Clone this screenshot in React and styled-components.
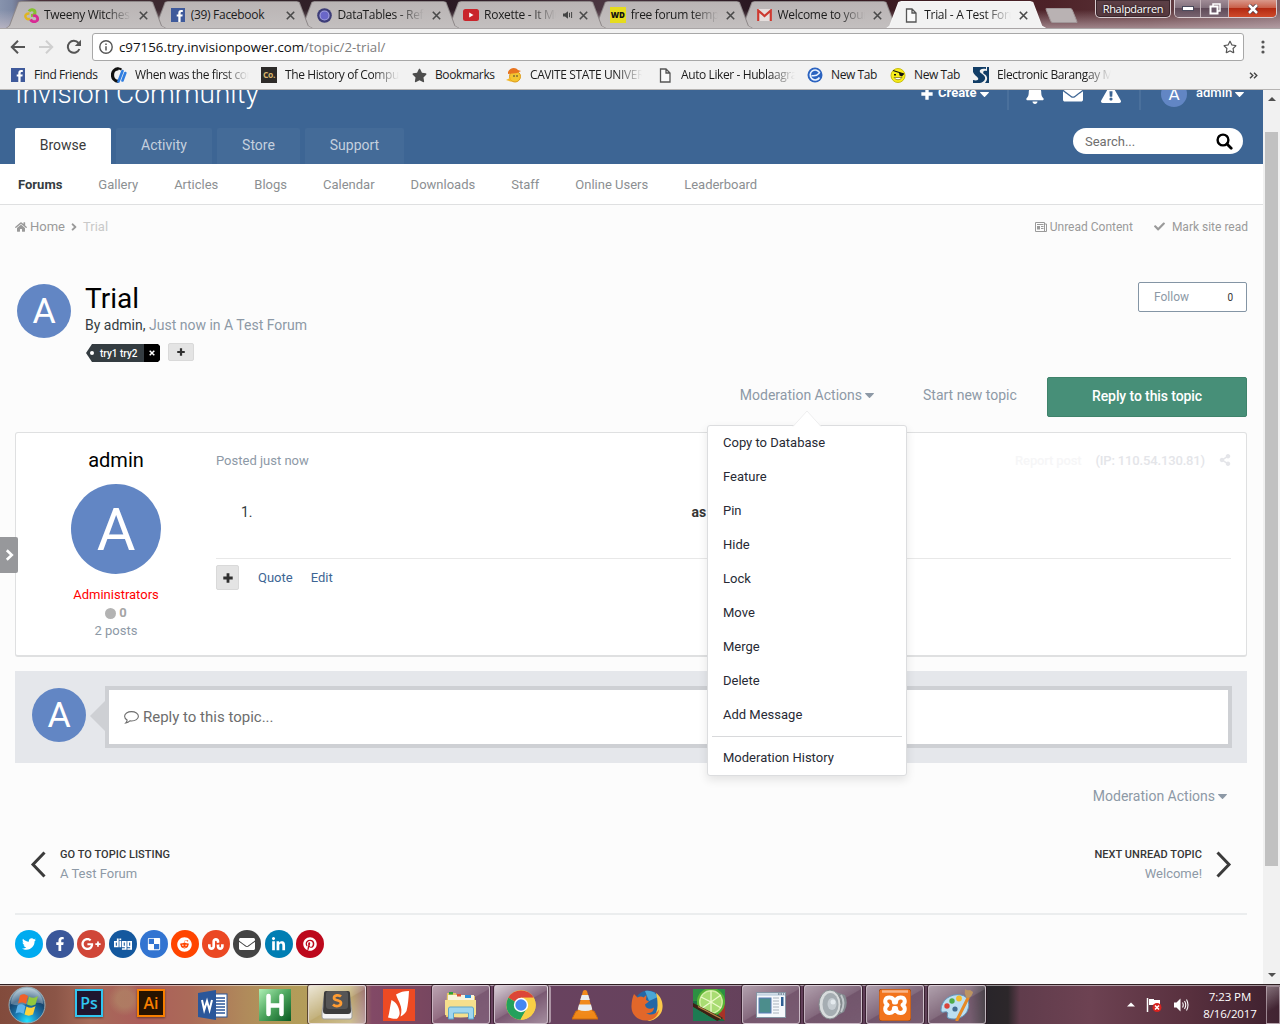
import React from 'react';
import styled, { createGlobalStyle, css } from 'styled-components';
import {
  FaHome, FaAngleRight, FaCheck, FaBell, FaEnvelope, FaExclamationTriangle,
  FaShareAlt, FaTwitter, FaFacebookF, FaGooglePlusG, FaDigg, FaDelicious,
  FaReddit, FaStumbleupon, FaLinkedinIn, FaPinterest, FaStar, FaRegStar,
} from 'react-icons/fa';

const GlobalStyle = createGlobalStyle`
  *, *::before, *::after { box-sizing: border-box; }
  body { margin: 0; font-family: Roboto, "Liberation Sans", sans-serif; }
  svg { display: block; flex: none; }
`;

const Screen = styled.div`
  width: 1280px;
  height: 1024px;
  overflow: hidden;
  display: flex;
  flex-direction: column;
  background: #fcfcfc;
`;

/* ---------- browser window ---------- */
const uiFont = css`font-family: "Open Sans", "Noto Sans", sans-serif;`;

const TitleBar = styled.div`
  height: 28px;
  flex: none;
  display: flex;
  padding-left: 6px;
  ${uiFont}
  background:
    linear-gradient(180deg, rgba(255,255,255,0) 35%, rgba(220,205,210,.55) 100%),
    linear-gradient(90deg, #8793ad 0, #7c88a4 12px, #4a3038 40px, #33242a 240px, #2b1a24 450px, #4a3540 600px, #28161f 760px, #3c1c22 900px, #4d2228 1050px, #5b3338 1150px, #7d5f66 1280px);
`;
const TabShape = styled.div`
  width: 160px;
  height: 27px;
  margin: 1px -13.3px 0 0;
  flex: none;
  position: relative;
  z-index: ${p => p.$z};
  background: ${p => (p.$active ? '#f6f6f6' : '#8d8788')};
  clip-path: polygon(0 100%, 3px 92%, 12px 4%, 15px 0, 144px 0, 147px 4%, 156px 92%, 160px 100%);
`;
const TabFace = styled.div`
  height: 27px;
  padding: 1px 0 0 17px;
  display: flex;
  align-items: center;
  background: ${p => (p.$active ? '#f2f2f2' : 'linear-gradient(180deg, #b9b4b4, #c3bfbf)')};
  clip-path: polygon(1px 100%, 4px 92%, 13px 5%, 16px 1px, 143px 1px, 146px 5%, 155px 92%, 159px 100%);
`;
const TabIcon = styled.div`
  width: 16px;
  height: 16px;
  flex: none;
  display: flex;
  align-items: center;
  justify-content: center;
`;
const fade = css`mask-image: linear-gradient(90deg, #000 calc(100% - 26px), transparent);`;
const TabText = styled.div`
  width: ${p => p.$w || 87}px;
  flex: none;
  margin-left: 5px;
  overflow: hidden;
  white-space: nowrap;
  font-size: 12px;
  letter-spacing: -0.3px;
  line-height: 18px;
  color: #1c1c1c;
  ${p => p.$fade && fade}
`;
const TabTail = styled.div`
  flex: 1;
  display: flex;
  align-items: center;
  justify-content: flex-end;
  gap: 6px;
  padding-right: 18px;
`;
const NewTab = styled.div`
  width: 27px;
  height: 15px;
  margin: 8px 0 0 15px;
  border-radius: 2px;
  transform: skewX(22deg);
  background: #b9b2b3;
  border: 1px solid #a19799;
`;
const Caption = styled.div`
  margin-left: auto;
  display: flex;
  gap: 3px;
  padding-right: 3px;
`;
const UserBadge = styled.div`
  width: 76px;
  height: 18px;
  border: 1px solid #d9ccd0;
  border-top: 0;
  border-radius: 0 0 5px 5px;
  background: linear-gradient(180deg, #5c4046, #56383f);
  box-shadow: inset 0 0 0 1px #3a252b;
  color: #fff;
  font-size: 11px;
  letter-spacing: -0.3px;
  line-height: 17px;
  text-align: center;
  text-shadow: 0 0 3px #000;
`;
const WindowButtons = styled.div`
  display: flex;
  width: 103px;
  height: 18px;
  overflow: hidden;
  border: 1px solid #d9ccd0;
  border-top: 0;
  border-radius: 0 0 5px 5px;
`;
const WindowButton = styled.div`
  width: ${p => p.$w}px;
  display: flex;
  align-items: center;
  justify-content: center;
  border-right: ${p => (p.$close ? 0 : '1px solid #c4b4ba')};
  background: ${p => (p.$close
    ? 'linear-gradient(180deg, #d9988a 0, #c9604a 45%, #b32a12 50%, #cf4a2a 100%)'
    : 'linear-gradient(180deg, #a08c96 0, #82707c 45%, #5f4a58 50%, #786470 100%)')};
`;

const Toolbar = styled.div`
  height: 62px;
  flex: none;
  display: flex;
  flex-direction: column;
  background: #f2f2f2;
  border-top: 1px solid #a9a5a6;
  border-bottom: 1px solid #b6b4b3;
  ${uiFont}
`;
const AddressRow = styled.div`
  height: 32px;
  padding: 4px 14px 0 10px;
  display: flex;
  align-items: center;
`;
const NavButtons = styled.div`
  width: 82px;
  display: flex;
  gap: 12px;
`;
const AddressBox = styled.div`
  width: 1152px;
  height: 28px;
  border: 1px solid #a8a8a8;
  border-radius: 3px;
  background: #fff;
  display: flex;
  align-items: center;
  padding: 0 6px;
  font-size: 13.3px;
  color: #111;
`;
const UrlText = styled.div`
  flex: 1;
  margin-left: 6px;
  line-height: 18px;
`;
const UrlPath = styled.span`color: #7d7d7d;`;
const MenuDots = styled.div`
  margin-left: 17px;
`;
const BookmarkRow = styled.div`
  height: 28px;
  display: flex;
  align-items: center;
  padding-left: 10px;
  font-size: 12px;
  letter-spacing: -0.4px;
  color: #1c1c1c;
`;
const Bookmark = styled.div`
  width: ${p => p.$w}px;
  flex: none;
  display: flex;
  align-items: center;
`;
const BookmarkText = styled.div`
  width: ${p => p.$w}px;
  margin-left: 8px;
  white-space: nowrap;
  overflow: hidden;
  line-height: 18px;
  ${p => p.$fade && fade}
`;
const More = styled.div`
  margin: 0 22px 0 auto;
`;

/* ---------- page ---------- */
const Viewport = styled.div`
  height: 894px;
  flex: none;
  display: flex;
`;
const Page = styled.div`
  width: 1263px;
  height: 894px;
  overflow: hidden;
  position: relative;
  background: #fcfcfc;
  color: #353c41;
  font-size: 13px;
`;
const ScrollBar = styled.div`
  width: 17px;
  background: #f1f1f1;
  display: flex;
  flex-direction: column;
  align-items: center;
`;
const ScrollArrow = styled.div`
  width: 0;
  height: 0;
  border: 4px solid transparent;
  border-${p => (p.$up ? 'bottom' : 'top')}: 4px solid #505050;
  border-${p => (p.$up ? 'top' : 'bottom')}-width: 0;
  margin: ${p => (p.$up ? '7px 0 31px' : '107px 0 0')};
`;
const ScrollThumb = styled.div`
  width: 13px;
  height: 734px;
  background: #c1c1c1;
`;

const Header = styled.header`
  height: 74px;
  background: #3d6594;
  overflow: hidden;
`;
const HeaderTop = styled.div`
  height: 42px;
  margin-top: -22px;
  padding: 0 19px 0 15px;
  display: flex;
  align-items: flex-start;
`;
const SiteName = styled.div`
  flex: 1;
  color: #fff;
  font-size: 28px;
  font-weight: 300;
  line-height: 52px;
  white-space: nowrap;
`;
const UserTools = styled.div`
  height: 52px;
  display: flex;
  align-items: center;
  color: #fff;
`;
const ToolLabel = styled.div`
  width: ${p => p.$w}px;
  margin: 0 3px 0 ${p => p.$ml}px;
  font-weight: ${p => p.$weight};
  font-size: 13px;
  line-height: 16px;
  padding-bottom: 2px;
  white-space: nowrap;
`;
const Divider = styled.div`
  width: 2px;
  height: 32px;
  margin: 0 ${p => p.$mr}px 0 ${p => p.$ml}px;
  background: #4a709c;
`;
const ToolIcons = styled.div`
  display: flex;
  align-items: center;
  gap: 18px;
`;
const Avatar = styled.div`
  width: ${p => p.$size}px;
  height: ${p => p.$size}px;
  flex: none;
  border-radius: 50%;
  background: #6286c4;
  color: #fff;
  font-size: ${p => p.$size * 0.66}px;
  line-height: ${p => p.$size * 1.03}px;
  text-align: center;
`;
const HeaderNav = styled.div`
  margin-top: 18px;
  height: 36px;
  padding: 0 20px 0 15px;
  display: flex;
  gap: 5px;
`;
const NavTab = styled.div`
  width: ${p => p.$w}px;
  height: 36px;
  border-radius: 2px 2px 0 0;
  background: ${p => (p.$active ? '#fff' : '#446b98')};
  color: ${p => (p.$active ? '#3a3a3a' : '#c4d0de')};
  font-size: 14px;
  line-height: 35px;
  text-align: center;
`;
const Search = styled.div`
  width: 170px;
  height: 26px;
  margin-left: auto;
  border-radius: 13px;
  background: #fff;
  display: flex;
  align-items: center;
  justify-content: space-between;
  padding: 0 10px 0 12px;
  color: #6e6e6e;
  line-height: 27px;
`;
const SubNav = styled.nav`
  height: 41px;
  border-bottom: 1px solid #dfe0e1;
  background: #fff;
  display: flex;
  gap: 36px;
  padding-left: 18px;
  line-height: 41px;
`;
const SubLink = styled.div`
  color: ${p => (p.$active ? '#353c41' : '#8c8f92')};
  font-weight: ${p => (p.$active ? 700 : 400)};
`;
const Content = styled.main`
  padding: 0 16px 0 15px;
`;
const Crumbs = styled.div`
  height: 43px;
  display: flex;
  align-items: center;
  color: #9a9a9a;
  margin-right: -1px;
`;
const Crumb = styled.div`
  margin-left: ${p => p.$ml}px;
  color: ${p => p.$c || 'inherit'};
  font-size: ${p => p.$size || 13}px;
`;
const CrumbTools = styled.div`
  margin-left: auto;
  display: flex;
  align-items: center;
`;
const TopicHead = styled.section`
  height: 129px;
  padding: 34px 0 0 2px;
  display: flex;
  align-items: flex-start;
`;
const TopicAvatar = styled.div`margin-top: 2px;`;
const TopicInfo = styled.div`
  flex: 1;
  padding-left: 14px;
`;
const TopicTitle = styled.h1`
  margin: 0;
  font-size: 28px;
  font-weight: 400;
  line-height: 34px;
  color: #000;
`;
const Byline = styled.div`
  font-size: 14px;
  line-height: 18px;
`;
const Muted = styled.span`color: #8d99a6;`;
const Tags = styled.div`
  display: flex;
  margin: 9px 0 0 1px;
  gap: 8px;
`;
const Tag = styled.div`
  width: 74px;
  height: 18px;
  margin-top: 1px;
  display: flex;
  align-items: center;
  padding-left: 4px;
  background: linear-gradient(90deg, #343c41 58px, #000 58px);
  clip-path: polygon(0 50%, 6px 0, 72px 0, 100% 2px, 100% 16px, 72px 100%, 6px 100%);
  color: #fff;
  font-size: 10px;
  font-weight: 500;
`;
const TagDot = styled.div`
  width: 4px;
  height: 4px;
  border-radius: 50%;
  background: #fff;
`;
const TagName = styled.div`
  width: 50px;
  padding-left: 6px;
  white-space: nowrap;
`;
const TagRemove = styled.div`
  width: 16px;
  display: flex;
  justify-content: center;
`;
const PlusButton = styled.div`
  width: ${p => p.$w}px;
  height: ${p => p.$h}px;
  border: 1px solid #d9d9d9;
  border-radius: 2px;
  background: #e4e4e4;
  color: #303030;
  display: flex;
  align-items: center;
  justify-content: center;
`;
const Follow = styled.div`
  width: 109px;
  height: 30px;
  border: 1px solid #8495a5;
  border-radius: 2px;
  background: #fff;
  display: flex;
  align-items: center;
  justify-content: space-between;
  padding: 0 13px 0 15px;
  font-size: 12px;
  color: #8d99a6;
`;
const FollowCount = styled.span`
  font-size: 10px;
  color: #333;
  padding-top: 1px;
`;
const Actions = styled.div`
  height: 55px;
  display: flex;
  justify-content: flex-end;
  font-size: 14px;
  line-height: 36px;
  color: #8d99a6;
`;
const ModLink = styled.div`
  display: flex;
  align-items: center;
  gap: 3px;
  height: 36px;
  font-size: 14px;
  color: #8d99a6;
`;
const StartLink = styled.div`
  width: 95px;
  margin: 0 29px 0 49px;
  white-space: nowrap;
`;
const ReplyButton = styled.div`
  width: 200px;
  height: 40px;
  border: 1px solid #3f836b;
  border-radius: 2px;
  background: #478f78;
  color: #fff;
  font-weight: 500;
  letter-spacing: -0.1px;
  text-align: center;
  line-height: 37px;
`;
const Post = styled.article`
  height: 225px;
  border: 1px solid #dfe0e1;
  border-bottom-width: 2px;
  border-radius: 3px;
  background: #fff;
  display: flex;
  padding-right: 15px;
`;
const Author = styled.aside`
  width: 200px;
  flex: none;
  display: flex;
  flex-direction: column;
  align-items: center;
  padding-top: 14px;
  line-height: 18px;
`;
const AuthorName = styled.div`
  font-size: 20px;
  line-height: 26px;
  color: #000;
  margin-bottom: 11px;
`;
const Group = styled.div`
  margin-top: 12px;
  color: #f00;
`;
const Reputation = styled.div`
  display: flex;
  align-items: center;
  gap: 3px;
  color: #a5a5a5;
  font-weight: 700;
`;
const RepDot = styled.div`
  width: 11px;
  height: 11px;
  border-radius: 50%;
  background: #b3b3b3;
`;
const PostBody = styled.div`
  flex: 1;
`;
const PostMeta = styled.div`
  height: 56px;
  padding-bottom: 2px;
  display: flex;
  align-items: center;
  color: #8d99a6;
`;
const PostTools = styled.div`
  margin-left: auto;
  display: flex;
  align-items: center;
  gap: 14px;
  font-weight: 500;
  letter-spacing: -0.15px;
  color: #e4e5e9;
`;
const Faint = styled.span`color: #f6f6f7;`;
const PostText = styled.div`
  height: 70px;
  border-bottom: 1px solid #e8e8e8;
  padding: 14px 0 0 25px;
  display: flex;
  font-size: 14px;
  line-height: 18px;
`;
const PostCenter = styled.b`
  margin-left: 439px;
  color: #353535;
`;
const PostControls = styled.div`
  display: flex;
  align-items: center;
  padding-top: 6px;
  color: #3d6594;
`;
const Control = styled.span`
  margin-left: ${p => p.$ml}px;
`;
const ReplyBox = styled.section`
  height: 92px;
  margin-top: 14px;
  padding: 15px 15px 0 17px;
  background: #e5e7eb;
  display: flex;
`;
const ReplyAvatar = styled.div`padding-top: 2px;`;
const ReplyArrow = styled.div`
  border: 15px solid transparent;
  border-right-color: #ced0d4;
  border-left-width: 0;
  height: 30px;
  margin: 15px 0 0 4px;
`;
const ReplyField = styled.div`
  flex: 1;
  height: 62px;
  border: 4px solid #ced0d4;
  background: #fff;
  display: flex;
  align-items: center;
  padding-left: 15px;
  gap: 4px;
  font-size: 15px;
  color: #6d6d6d;
`;
const BottomActions = styled.div`
  height: 36px;
  margin-top: 15px;
  padding-right: 20px;
  display: flex;
  justify-content: flex-end;
`;
const Pager = styled.div`
  height: 101px;
  border-bottom: 2px solid #ebedee;
  padding: 31px 15px 0;
  display: flex;
  justify-content: space-between;
`;
const PagerLink = styled.div`
  display: flex;
  gap: 14px;
  text-align: ${p => (p.$right ? 'right' : 'left')};
`;
const PagerHint = styled.div`
  font-size: 11px;
  font-weight: 500;
  letter-spacing: 0.05px;
  line-height: 19px;
  color: #353535;
`;
const PagerName = styled.div`
  line-height: 19px;
  color: #8d99a6;
`;
const PagerChevron = styled.svg`
  margin-top: 6px;
`;
const Shares = styled.div`
  display: flex;
  gap: 3.2px;
  padding-top: 15px;
`;
const Share = styled.div`
  width: 28px;
  height: 28px;
  border-radius: 50%;
  background: ${p => p.$c};
  color: #fff;
  display: flex;
  align-items: center;
  justify-content: center;
`;
const Drawer = styled.div`
  position: absolute;
  left: 0;
  top: 447px;
  width: 18px;
  height: 36px;
  border-radius: 0 2px 2px 0;
  background: #97989b;
  color: #fff;
  display: flex;
  align-items: center;
  justify-content: center;
`;
const Menu = styled.div`
  position: absolute;
  left: 707px;
  top: 335px;
  width: 200px;
  height: 351px;
  border: 1px solid #dcdddf;
  border-radius: 3px;
  background: #fff;
  box-shadow: 0 4px 10px rgba(0, 0, 0, .1);
`;
const MenuNotch = styled.svg`
  position: absolute;
  left: 84px;
  top: -16px;
`;
const MenuItem = styled.div`
  height: 34px;
  padding-left: 15px;
  line-height: 33px;
  color: #272a34;
`;
const MenuRule = styled.div`
  height: 1px;
  margin: 4px 4px;
  background: #d8d9db;
`;

/* ---------- taskbar ---------- */
const TaskBar = styled.div`
  height: 40px;
  flex: none;
  display: flex;
  align-items: flex-start;
  border-top: 1px solid #2f2023;
  box-shadow: inset 0 1px 0 rgba(255,255,255,.5);
  color: #fff;
  ${uiFont}
  background:
    radial-gradient(circle at 125px 14px, rgba(178,140,105,.6) 0 8px, transparent 17px),
    linear-gradient(90deg, #824b3c 0, #8b5547 55px, #a66b59 90px, #ab5d5a 140px, #ab6a58 190px, #b08a5b 245px, #b29b59 285px, #b6a05c 350px, #824966 372px, #7a4760 420px, #694260 480px, #66425c 720px, #5f3e58 860px, #61445a 970px, #29252a 988px, #2c272a 1008px, #603c4c 1020px, #6d4252 1090px, #58303e 1190px, #3d202e 1280px);
`;
const Start = styled.div`
  width: 60px;
  height: 39px;
  display: flex;
  align-items: center;
  padding-left: 8px;
`;
const Task = styled.div`
  width: 58px;
  height: 39px;
  margin-right: 4px;
  flex: none;
  display: flex;
  align-items: center;
  justify-content: center;
  border: 1px solid transparent;
  ${p => p.$open && css`
    border-color: rgba(235,225,232,.65);
    border-radius: 3px;
    box-shadow: 0 0 0 1px rgba(30,12,22,.6);
    background: linear-gradient(150deg, rgba(255,255,255,${p.$bright ? 0.75 : 0.5}) 0, rgba(255,255,255,.22) 50%, rgba(255,255,255,.12) 52%, rgba(255,255,255,${p.$bright ? 0.4 : 0.15}) 100%);
  `}
  ${p => p.$stack && css`
    width: 54px;
    margin-right: 8px;
    box-shadow: 0 0 0 1px rgba(30,12,22,.6), 4px 0 0 -1px rgba(190,170,182,.8);
  `}
`;
const AppTile = styled.div`
  width: 28px;
  height: 28px;
  margin-bottom: 3px;
  border: 2px solid ${p => p.$c};
  background: ${p => p.$bg};
  color: ${p => p.$c};
  font-size: 16px;
  font-weight: 600;
  line-height: 24px;
  text-align: center;
  box-shadow: 0 1px 2px rgba(0,0,0,.4);
`;
const Tray = styled.div`
  margin-left: auto;
  height: 39px;
  display: flex;
  align-items: center;
`;
const TrayIcons = styled.div`
  width: 67px;
  display: flex;
  align-items: center;
  gap: 11px;
`;
const Clock = styled.div`
  width: 72px;
  font-size: 11.5px;
  line-height: 17px;
  letter-spacing: -0.1px;
  text-align: center;
  white-space: nowrap;
`;
const ShowDesktop = styled.div`
  width: 14px;
  height: 38px;
  border: 1px solid rgba(230,215,222,.55);
  background: linear-gradient(150deg, rgba(255,255,255,.35), rgba(255,255,255,.02) 60%);
`;

/* ---------- small drawings ---------- */
const Caret = () => (
  <svg width="9" height="5" viewBox="0 0 9 5"><path d="M.4 0h8.200q.5.2.2.7L5 4.700q-.5.400-1 0L.2.700Q-.1.2.4 0z" fill="currentColor" /></svg>
);
const Plus = ({ size }) => (
  <svg width={size} height={size} viewBox="0 0 10 10"><path d="M5 .3v9.400M.3 5h9.400" stroke="currentColor" strokeWidth="2.800" /></svg>
);
const Magnifier = () => (
  <svg width="17" height="17" viewBox="0 0 17 17"><circle cx="7" cy="7" r="5.400" fill="none" stroke="#000" strokeWidth="2.400" /><path d="M11 11l4.200 4.200" stroke="#000" strokeWidth="2.800" strokeLinecap="round" /></svg>
);
const Newspaper = () => (
  <svg width="12" height="10" viewBox="0 0 12 10"><path d="M.5 9.500V.5h9v9zM9.500 2h2v7.500H1" fill="none" stroke="#9a9a9a" /><path d="M2 4h3v3.500H2z" fill="#9a9a9a" /><path d="M6 4.500h2.500M6 6.500h2.500M2 2.500h6.500" stroke="#9a9a9a" /></svg>
);
const Bubble = () => (
  <svg width="15" height="13" viewBox="0 0 15 13"><path d="M7.500.6c3.900 0 6.900 2.100 6.900 4.700s-3 4.700-6.900 4.700c-.6 0-1.100 0-1.600-.1-1.100 1-2.300 1.700-4.100 2 .8-.8 1.300-1.600 1.300-2.800C1.500 8.200.6 6.900.6 5.300.6 2.700 3.600.6 7.500.6z" fill="none" stroke="#6d6d6d" strokeWidth="1.100" /></svg>
);
const CloseX = () => (
  <svg width="9" height="9" viewBox="0 0 9 9"><path d="M.8.8l7.400 7.400M8.200.8L.8 8.200" stroke="#4a4a4a" strokeWidth="1.600" /></svg>
);
const FbIcon = () => (
  <svg width="14" height="14" viewBox="0 0 14 14"><rect width="14" height="14" fill="#3f5a9b" /><path d="M7.300 14V8.600H5.700V6.500h1.600V5c0-1.900 1.100-2.900 2.800-2.900h1.700v2h-1.100c-.8 0-1.100.4-1.100 1.100v1.300h2.100l-.3 2.100H9.600V14z" fill="#fff" /></svg>
);
const PageIcon = () => (
  <svg width="12" height="15" viewBox="0 0 12 15"><path d="M1.500 1h5.500l4 4v9h-9.500zM7 1v4h4" fill="#fafafa" stroke="#555" strokeWidth="1.300" /></svg>
);
const favicons = {
  tweeny: <svg width="15" height="15" viewBox="0 0 15 15"><path d="M5 3.300C6 1 11 1 11 4.500 11 7 8.500 7.500 7 7.500" fill="none" stroke="#86c030" strokeWidth="3" /><path d="M5.500 5.500C2 5 0 8 2.500 10.500c1 .8 2.500.8 3.500 0" fill="none" stroke="#dfb520" strokeWidth="2.400" /><path d="M9 8c4-1.500 6 3 3.500 5-2 1.500-5 .5-6-1.500" fill="none" stroke="#d82a94" strokeWidth="2.800" /></svg>,
  fb: <FbIcon />,
  dt: <svg width="15" height="15" viewBox="0 0 15 15"><circle cx="7.500" cy="7.500" r="7.300" fill="#3d3d78" /><circle cx="7.500" cy="7.500" r="4.500" fill="#6a67c9" stroke="#a29fe0" strokeWidth="1.200" /></svg>,
  yt: <svg width="16" height="12" viewBox="0 0 16 12"><rect width="16" height="12" rx="2.500" fill="#c9252b" /><path d="M6.200 3.500v5l4.300-2.500z" fill="#fff" /></svg>,
  gm: <svg width="15" height="12" viewBox="0 0 15 12"><rect width="15" height="12" fill="#e5dedd" /><path d="M1.200 12V1.500L7.500 7l6.300-5.500V12" fill="none" stroke="#cc3a31" strokeWidth="2.200" /></svg>,
  page: <PageIcon />,
};
const WdIcon = styled.div`
  width: 16px;
  height: 16px;
  background: #e6dc1e;
  color: #111;
  font: 800 8px/16px "Open Sans", sans-serif;
  letter-spacing: 0;
  text-align: center;
`;
const CoIcon = styled.div`
  width: 16px;
  height: 16px;
  background: #2d2b29;
  color: #d8b56c;
  font: 700 8.5px/16px "Open Sans", sans-serif;
  text-align: center;
`;
const SpeakerSmall = () => (
  <svg width="10" height="8" viewBox="0 0 10 8"><path d="M0 2.500h2L5 .3v7.400L2 5.500H0z" fill="#444" /><path d="M6.500 1.800v4.400M8.600 1v6" stroke="#444" /></svg>
);

const tabs = [
  { icon: favicons.tweeny, text: 'Tweeny Witches', fade: true },
  { icon: favicons.fb, text: '(39) Facebook' },
  { icon: favicons.dt, text: 'DataTables - Refer', fade: true },
  { icon: favicons.yt, text: 'Roxette - It Must', fade: true, w: 72, audio: true },
  { icon: <WdIcon>WD</WdIcon>, text: 'free forum templates', fade: true },
  { icon: favicons.gm, text: 'Welcome to your', fade: true },
  { icon: favicons.page, text: 'Trial - A Test Forum', fade: true, active: true },
];

const bookmarks = [
  { w: 101, tw: 68, text: 'Find Friends', icon: <FbIcon /> },
  { w: 150, tw: 114, text: 'When was the first computer', fade: true, icon: <svg width="16" height="16" viewBox="0 0 16 16"><path d="M7.500 1.600C-.5 2-.5 14 7.500 14.400" fill="none" stroke="#111" strokeWidth="3.200" /><path d="M7 1.600q2 0 3.500 1" stroke="#111" strokeWidth="2" fill="none" /><path d="M7.500 14.500L11.500 4M11.500 13.500L14.300 6" stroke="#2f7de0" strokeWidth="2.600" strokeLinecap="round" /></svg> },
  { w: 150, tw: 114, text: 'The History of Computers', fade: true, icon: <CoIcon>Co.</CoIcon> },
  { w: 95, tw: 62, text: 'Bookmarks', icon: <FaStar size={15} color="#4d4d4d" /> },
  { w: 151, tw: 112, text: 'CAVITE STATE UNIVERSITY', fade: true, icon: <svg width="16" height="16" viewBox="0 0 16 16"><circle cx="9" cy="9.500" r="5.500" fill="#f4c531" stroke="#dd9a1b" /><path d="M2 5c2-5 8-5 10-2l3 1-4 2-9 1z" fill="#e8741f" /><path d="M0 13l4-2 2 4z" fill="#f5b826" /><circle cx="8" cy="9" r=".8" fill="#333" /><circle cx="11" cy="9" r=".8" fill="#333" /></svg> },
  { w: 150, tw: 114, text: 'Auto Liker - Hublaagram', fade: true, icon: <PageIcon /> },
  { w: 83, tw: 50, text: 'New Tab', icon: <svg width="16" height="16" viewBox="0 0 16 16"><circle cx="8" cy="8" r="7.500" fill="#2b63c0" /><path d="M12.500 10.500a5 5 0 1 1 .3-4.500M4.500 8.600c3 .6 6-.4 8-2.600" fill="none" stroke="#e9f2ff" strokeWidth="1.600" /></svg> },
  { w: 83, tw: 50, text: 'New Tab', icon: <svg width="16" height="16" viewBox="0 0 16 16"><circle cx="8" cy="8.500" r="7" fill="#f8ee18" stroke="#c8bc10" /><path d="M3 3.500l11 3.500" stroke="#111" strokeWidth="1.200" /><path d="M9 5.500l5 1.500-2 2.500-2.500-1zM4 7h2v1.500H4z" fill="#111" /><path d="M4 10.500c2 3 6 3 8 0z" fill="#fff" stroke="#7c6c08" strokeWidth=".7" /></svg> },
  { w: 150, tw: 114, text: 'Electronic Barangay Management', fade: true, icon: <svg width="16" height="16" viewBox="0 0 16 16"><path d="M0 0h13v2C8 1 6 3 7 5s6 3 5 7-7 5-12 4v-3c4 1 6 0 5-2S-1 7 0 3z" fill="#123d66" /><path d="M14 0h2v16h-4c3-3 3-7-1-9-2-2 0-4 3-3z" fill="#123d66" /></svg> },
];

const menuItems = ['Copy to Database', 'Feature', 'Pin', 'Hide', 'Lock', 'Move', 'Merge', 'Delete', 'Add Message'];

const shares = [
  ['#00abf0', FaTwitter, 14], ['#3a579a', FaFacebookF, 14], ['#d04638', FaGooglePlusG, 20], ['#14589e', FaDigg, 18],
  ['#3274d1', FaDelicious, 14], ['#ff4500', FaReddit, 15], ['#eb4823', FaStumbleupon, 16], ['#444444', FaEnvelope, 16],
  ['#007eb3', FaLinkedinIn, 15], ['#bd081c', FaPinterest, 14],
];

const StartOrb = () => (
  <svg width="38" height="38" viewBox="0 0 38 38">
    <defs><radialGradient id="orb" cx=".5" cy=".95" r=".9"><stop offset="0" stopColor="#22e4ff" /><stop offset=".35" stopColor="#1a7fb8" /><stop offset=".7" stopColor="#17456e" /><stop offset="1" stopColor="#9cb8c8" /></radialGradient></defs>
    <circle cx="19" cy="19" r="18" fill="url(#orb)" stroke="#98a9b0" />
    <path d="M3 18a16 16 0 0 1 32 0C26 14 15 22 3 18z" fill="#fff" opacity=".28" />
    <path d="M12 9.500c3-2 5-1.500 8 .5l-2 8c-3-2-5-2-8-.5z" fill="#f0602a" />
    <path d="M21 10.500c3 2 6 1.500 9-.5l-2.500 8.500c-3 1.500-5.500 1.500-8.500 0z" fill="#93c83e" />
    <path d="M9.500 19.500c3-2 5-1.500 8 .5l-2 8c-3-2-5-2-8-.5z" fill="#5fb4ec" />
    <path d="M18.500 20.500c3 2 6 1.500 9-.5L25 28.500c-3 1.500-5.500 1.500-8.500 0z" fill="#fdd33c" />
  </svg>
);
const WordIcon = () => (
  <svg width="30" height="30" viewBox="0 0 30 30"><rect x="14" y="4" width="15" height="23" fill="#fff" stroke="#2b579a" /><path d="M17 8h10M17 11h10M17 14h10M17 17h10M17 20h10M17 23h10" stroke="#2b579a" strokeWidth="1.300" /><path d="M0 3l18-3v30L0 27z" fill="#2b579a" /><path d="M4 10l2.200 10L9 11l2.500 9L14 10" fill="none" stroke="#fff" strokeWidth="2" /></svg>
);
const HIcon = () => (
  <svg width="32" height="32" viewBox="0 0 32 32"><defs><linearGradient id="hg" x1="0" y1="0" x2="1" y2="1"><stop offset="0" stopColor="#aef0b4" /><stop offset=".5" stopColor="#4ba45c" /><stop offset="1" stopColor="#0a5a22" /></linearGradient></defs><rect width="32" height="32" fill="url(#hg)" /><path d="M9.500 7v18M22.500 7v18M10 16.500h12" stroke="#fff" strokeWidth="4.500" strokeLinecap="round" /></svg>
);
const SublimeIcon = () => (
  <svg width="32" height="30" viewBox="0 0 32 30"><path d="M4 2h24l3 20v5q0 2-2 2H3q-2 0-2-2v-5z" fill="#f4f4f4" stroke="#9d9d9d" /><path d="M5 1h22q2 0 2 2l1 18q0 3-3 3H5q-3 0-3-3L3 3q0-2 2-2z" fill="#3c3c3c" /><rect x="5" y="1" width="22" height="18" rx="3" fill="#565656" /><path d="M20 6.500c-2-2-7-1.500-7 1.500s7 1.500 7 5-5.500 4-8 1.500" fill="none" stroke="#ff9c32" strokeWidth="2.700" /></svg>
);
const NitroIcon = () => (
  <svg width="32" height="32" viewBox="0 0 32 32"><rect width="32" height="32" fill="#ee4a23" /><path d="M8.500 11C7 17 6.500 24 5 28.500c4 1 6 1.500 9 1.200 2-2 3-4 2.500-7C16 18 13 13 8.500 11z" fill="#fff" /><path d="M13 5.500C17 3 21 2 26 2c-.5 8-1 14-2.500 20-1.500 2.500-3.500 4.500-6 5.500 1.500-5 1-9-.5-12.500-1-3-3-6-4-9.500z" fill="#fff" /></svg>
);
const ExplorerIcon = () => (
  <svg width="32" height="30" viewBox="0 0 32 30"><path d="M2 3h9l1 3h18v21H1z" fill="#e7c765" /><path d="M3 5h26v5H3z" fill="#f8f5dd" /><rect x="4" y="2" width="4" height="2.500" fill="#2da136" /><rect x="12" y="4" width="4" height="2.500" fill="#d95038" /><rect x="20" y="5" width="6" height="3" fill="#2d91db" /><path d="M0 10h31v15q-15 5-31 0z" fill="#f5df8d" /><path d="M5 17h22q1.500 0 1.500 2v10h-5v-6h-15v6h-5V19q0-2 1.500-2z" fill="#9fd6ef" stroke="#5ca6cc" /></svg>
);
const ChromeIcon = () => (
  <svg width="30" height="30" viewBox="0 0 30 30"><circle cx="15" cy="15" r="14.700" fill="#f9cf45" /><path d="M15 15L2.300 7.700A14.700 14.700 0 0 1 27.700 7.700H15z" fill="#dc4638" /><path d="M15 15l-12.700-7.300a14.700 14.700 0 0 0 12 22l6.800-12z" fill="#23a15c" /><path d="M15 7.700h12.700a14.700 14.700 0 0 1-13 22l7-12z" fill="#f9cf45" /><circle cx="15" cy="15" r="7.200" fill="#fff" /><circle cx="15" cy="15" r="5.700" fill="#4586f2" /></svg>
);
const VlcIcon = () => (
  <svg width="26" height="31" viewBox="0 0 26 31"><path d="M4 22h18l4 8H0z" fill="#f08818" stroke="#cc6a0a" /><path d="M11 2q2-2 4 0l6 22q-8 4-16 0z" fill="#f18a1c" /><path d="M9.700 6h6.600l1.500 5H8.200zM7 15.500h12l1.300 5q-7 3-14.600 0z" fill="#e9edf0" /></svg>
);
const FirefoxIcon = () => (
  <svg width="32" height="32" viewBox="0 0 32 32"><circle cx="17" cy="15" r="13.500" fill="#2467a6" /><path d="M14 2c6-1 10 1 13 6l-9 4z" fill="#49a6d6" /><path d="M25 4c7 5 8 14 5 20-3 5-8 8-14 8 8-3 11-10 10.500-17C26.500 11 26 8 25 4z" fill="#fbc84a" /><path d="M3 5l3.500 3.500c2.500-1.500 4.500-1.200 6 0L15.500 6l-.5 5 3 1.500-4 3c.5 4.500 5.500 5.500 9 3 0 4-3.500 6.500-8 5.500 4.500 3 10 1.500 13-3.500C27 28 22 31.500 15 31.500 6 31.500 0 25 .5 16.500.7 12 1.500 8 3 5z" fill="#e2672a" /></svg>
);
const LimeIcon = () => (
  <svg width="32" height="32" viewBox="0 0 32 32"><rect width="32" height="32" fill="#1b6e45" /><path d="M0 0h32v12H0z" fill="#2c8f42" /><path d="M20 20l12-8v20z" fill="#a83226" /><circle cx="18" cy="13" r="13" fill="#d5efa5" stroke="#58b437" strokeWidth="2.200" /><circle cx="18" cy="13" r="10.500" fill="#a9dc72" /><path d="M18 13V2M18 13L8 8M18 13l10-7M18 13L8 20M18 13l10 6M18 13v11" stroke="#edfacb" strokeWidth="1.300" /><path d="M0 14l30 15L24 32 0 18z" fill="#3d2115" /><path d="M0 18l24 14H0z" fill="#1d7a52" /><path d="M5 17.500L28 29.500" stroke="#b88444" strokeWidth="1.300" /></svg>
);
const WindowIcon = () => (
  <svg width="30" height="26" viewBox="0 0 30 26"><rect x=".5" y=".5" width="29" height="25" fill="#f5f8fb" stroke="#8493a2" /><path d="M1 2.500h28" stroke="#c5d4e2" strokeWidth="2.500" /><path d="M22 2h6" stroke="#43546a" strokeDasharray="1.500 1" /><rect x="3" y="6" width="12" height="15" fill="#4c8d8c" stroke="#5b7bb8" /><path d="M17 6h6M17 9h6M17 12h6M17 15h6M17 18h6M17 21h6" stroke="#a9b2bc" /><rect x="25" y="5" width="2.500" height="9" fill="#2f5f94" /></svg>
);
const VolumeIcon = () => (
  <svg width="30" height="31" viewBox="0 0 30 31"><path d="M12 1l15 5q4 9-1 17l-14 7z" fill="#858c91" /><path d="M23 6q5 8 0 17" stroke="#c1c7ca" strokeWidth="2" fill="none" /><ellipse cx="12" cy="15.500" rx="11" ry="14.500" fill="#d8dcdd" stroke="#868c90" /><ellipse cx="12.500" cy="15.500" rx="8" ry="11.500" fill="#a5adb2" /><ellipse cx="14" cy="15" rx="4.500" ry="6" fill="#c6cdd2" /><circle cx="15" cy="13" r="2.500" fill="#e4eaee" /></svg>
);
const XamppIcon = () => (
  <svg width="32" height="32" viewBox="0 0 32 32"><rect width="32" height="32" rx="3" fill="#f2741d" stroke="#a4501a" /><path d="M3 2.500h26" stroke="#f9b689" strokeWidth="2.500" /><path d="M10.500 8.500c-5 0-5.500 5-2 7.500-3.500 2.500-3 8 2 8 3.500 0 4.500-2 4.500-5h2c0 3 1 5 4.500 5 5 0 5.500-5.500 2-8 3.500-2.500 3-7.500-2-7.500-3.500 0-4.500 2-4.500 5h-2c0-3-1-5-4.500-5z" fill="#f2741d" stroke="#fff" strokeWidth="4" strokeLinejoin="round" /></svg>
);
const PaintIcon = () => (
  <svg width="34" height="32" viewBox="0 0 34 32"><path d="M1 21C1 11 11 4 21 6c7 1 9 8 7 14-2 8-12 12-20 9-2-2 1-5-1-6-2-1-6 2-6-2z" fill="#bcdff1" stroke="#6296bb" /><circle cx="7" cy="17" r="2.700" fill="#d9443a" /><circle cx="12" cy="12" r="2.700" fill="#4dab4a" /><circle cx="19" cy="9.500" r="2.900" fill="#f4bc2d" /><circle cx="15" cy="20" r="2.600" fill="#436d91" /><path d="M28 9L17 31" stroke="#e68a26" strokeWidth="3" strokeLinecap="round" /><path d="M26 8q-2-4-1-8 2 2 5 1l3 2q-1 5-5 6z" fill="#bc9461" /></svg>
);

function App() {
  return (
    <Screen>
      <GlobalStyle />
      <TitleBar>
        {tabs.map((t, i) => (
          <TabShape key={t.text} $active={t.active} $z={t.active ? 20 : 10 - i}>
            <TabFace $active={t.active}>
              <TabIcon>{t.icon}</TabIcon>
              <TabText $w={t.w} $fade={t.fade}>{t.text}</TabText>
              <TabTail>{t.audio && <SpeakerSmall />}<CloseX /></TabTail>
            </TabFace>
          </TabShape>
        ))}
        <NewTab />
        <Caption>
          <UserBadge>Rhalpdarren</UserBadge>
          <WindowButtons>
            <WindowButton $w={26}><svg width="12" height="5" viewBox="0 0 12 5"><rect x=".5" y=".5" width="11" height="4" fill="#fff" stroke="#4a4a5c" /></svg></WindowButton>
            <WindowButton $w={28}><svg width="12" height="12" viewBox="0 0 12 12"><path d="M4 1h7v7H4z" fill="none" stroke="#fff" strokeWidth="1.500" /><path d="M1.500 3.500h7v7h-7z" fill="#6a5868" stroke="#fff" strokeWidth="2" /></svg></WindowButton>
            <WindowButton $w={47} $close><svg width="12" height="10" viewBox="0 0 12 10"><path d="M2 1l8 8M10 1L2 9" stroke="#4b3540" strokeWidth="4" /><path d="M2 1l8 8M10 1L2 9" stroke="#fff" strokeWidth="2.500" /></svg></WindowButton>
          </WindowButtons>
        </Caption>
      </TitleBar>

      <Toolbar>
        <AddressRow>
          <NavButtons>
            <svg width="16" height="16" viewBox="0 0 16 16"><path d="M15 8H2.500M8 1.800L1.800 8 8 14.200" fill="none" stroke="#555" strokeWidth="2" /></svg>
            <svg width="16" height="16" viewBox="0 0 16 16"><path d="M1 8h12.500M8 1.800L14.200 8 8 14.200" fill="none" stroke="#cfcfcf" strokeWidth="2" /></svg>
            <svg width="16" height="16" viewBox="0 0 16 16"><path d="M13.400 10A6 6 0 1 1 12.500 4" fill="none" stroke="#555" strokeWidth="2" /><path d="M15 .8v6.200H8.800z" fill="#555" /></svg>
          </NavButtons>
          <AddressBox>
            <svg width="14" height="14" viewBox="0 0 14 14"><circle cx="7" cy="7" r="6.200" fill="none" stroke="#555" strokeWidth="1.400" /><path d="M7 6.200v4.300M7 3.400v1.500" stroke="#555" strokeWidth="1.500" /></svg>
            <UrlText>c97156.try.invisionpower.com<UrlPath>/topic/2-trial/</UrlPath></UrlText>
            <FaRegStar size={14} color="#555" />
          </AddressBox>
          <MenuDots>
            <svg width="4" height="14" viewBox="0 0 4 14" fill="#555"><circle cx="2" cy="2" r="1.600" /><circle cx="2" cy="7" r="1.600" /><circle cx="2" cy="12" r="1.600" /></svg>
          </MenuDots>
        </AddressRow>
        <BookmarkRow>
          {bookmarks.map((b, i) => (
            <Bookmark key={i} $w={b.w}>
              <TabIcon>{b.icon}</TabIcon>
              <BookmarkText $w={b.tw} $fade={b.fade}>{b.text}</BookmarkText>
            </Bookmark>
          ))}
          <More><svg width="9" height="7" viewBox="0 0 9 7"><path d="M1 .7l2.800 2.800L1 6.300M5 .7l2.800 2.800L5 6.300" fill="none" stroke="#444" strokeWidth="1.400" /></svg></More>
        </BookmarkRow>
      </Toolbar>

      <Viewport>
        <Page>
          <Header>
            <HeaderTop>
              <SiteName>Invision Community</SiteName>
              <UserTools>
                <Plus size={12} />
                <ToolLabel $w={39} $ml={5} $weight={700}>Create</ToolLabel>
                <Caret />
                <Divider $ml={18} $mr={16} />
                <ToolIcons>
                  <FaBell size={20} />
                  <FaEnvelope size={20} />
                  <FaExclamationTriangle size={20} />
                </ToolIcons>
                <Divider $ml={18} $mr={20} />
                <Avatar $size={26}>A</Avatar>
                <ToolLabel $w={36} $ml={9} $weight={500}>admin</ToolLabel>
                <Caret />
              </UserTools>
            </HeaderTop>
            <HeaderNav>
              <NavTab $w={96} $active>Browse</NavTab>
              <NavTab $w={96}>Activity</NavTab>
              <NavTab $w={83}>Store</NavTab>
              <NavTab $w={99}>Support</NavTab>
              <Search>Search...<Magnifier /></Search>
            </HeaderNav>
          </Header>
          <SubNav>
            <SubLink $active>Forums</SubLink>
            {['Gallery', 'Articles', 'Blogs', 'Calendar', 'Downloads', 'Staff', 'Online Users', 'Leaderboard'].map(l => (
              <SubLink key={l}>{l}</SubLink>
            ))}
          </SubNav>
          <Content>
            <Crumbs>
              <FaHome size={12} />
              <Crumb $ml={3}>Home</Crumb>
              <Crumb $ml={3}><FaAngleRight size={12} /></Crumb>
              <Crumb $ml={3} $c="#c9c9c9">Trial</Crumb>
              <CrumbTools>
                <Newspaper />
                <Crumb $ml={3} $size={12}>Unread Content</Crumb>
                <Crumb $ml={21}><FaCheck size={11} /></Crumb>
                <Crumb $ml={7} $size={12}>Mark site read</Crumb>
              </CrumbTools>
            </Crumbs>
            <TopicHead>
              <TopicAvatar><Avatar $size={54}>A</Avatar></TopicAvatar>
              <TopicInfo>
                <TopicTitle>Trial</TopicTitle>
                <Byline>By admin, <Muted>Just now in A Test Forum</Muted></Byline>
                <Tags>
                  <Tag>
                    <TagDot />
                    <TagName>try1 try2</TagName>
                    <TagRemove><svg width="6" height="6" viewBox="0 0 6 6"><path d="M.7.7l4.600 4.600M5.300.7L.7 5.300" stroke="#fff" strokeWidth="1.500" /></svg></TagRemove>
                  </Tag>
                  <PlusButton $w={26} $h={18}><Plus size={8} /></PlusButton>
                </Tags>
              </TopicInfo>
              <Follow>Follow<FollowCount>0</FollowCount></Follow>
            </TopicHead>
            <Actions>
              <ModLink>Moderation Actions <Caret /></ModLink>
              <StartLink>Start new topic</StartLink>
              <ReplyButton>Reply to this topic</ReplyButton>
            </Actions>
            <Post>
              <Author>
                <AuthorName>admin</AuthorName>
                <Avatar $size={90}>A</Avatar>
                <Group>Administrators</Group>
                <Reputation><RepDot />0</Reputation>
                <Muted>2 posts</Muted>
              </Author>
              <PostBody>
                <PostMeta>
                  Posted just now
                  <PostTools><Faint>Report post</Faint><span>(IP: 110.54.130.81)</span><FaShareAlt size={12} /></PostTools>
                </PostMeta>
                <PostText>1.<PostCenter>as</PostCenter></PostText>
                <PostControls>
                  <PlusButton $w={23} $h={25}><Plus size={10} /></PlusButton>
                  <Control $ml={19}>Quote</Control>
                  <Control $ml={18}>Edit</Control>
                </PostControls>
              </PostBody>
            </Post>
            <ReplyBox>
              <ReplyAvatar><Avatar $size={54}>A</Avatar></ReplyAvatar>
              <ReplyArrow />
              <ReplyField><Bubble />Reply to this topic...</ReplyField>
            </ReplyBox>
            <BottomActions><ModLink>Moderation Actions <Caret /></ModLink></BottomActions>
            <Pager>
              <PagerLink>
                <PagerChevron width="16" height="27" viewBox="0 0 16 27"><path d="M14.500 1.500L3 13.500l11.500 12" fill="none" stroke="#3b3b3b" strokeWidth="3" /></PagerChevron>
                <div><PagerHint>GO TO TOPIC LISTING</PagerHint><PagerName>A Test Forum</PagerName></div>
              </PagerLink>
              <PagerLink $right>
                <div><PagerHint>NEXT UNREAD TOPIC</PagerHint><PagerName>Welcome!</PagerName></div>
                <PagerChevron width="16" height="27" viewBox="0 0 16 27"><path d="M1.500 1.500L13 13.500l-11.500 12" fill="none" stroke="#3b3b3b" strokeWidth="3" /></PagerChevron>
              </PagerLink>
            </Pager>
            <Shares>
              {shares.map(([c, Icon, size]) => <Share key={c} $c={c}><Icon size={size} /></Share>)}
            </Shares>
          </Content>
          <Drawer><svg width="9" height="12" viewBox="0 0 9 12"><path d="M1.800 1.200L6.800 6l-5 4.800" fill="none" stroke="#fff" strokeWidth="2.600" /></svg></Drawer>
          <Menu>
            <MenuNotch width="30" height="17" viewBox="0 0 30 17"><path d="M1 16.500L15 1l14 15.500" fill="#fff" stroke="#eeeeef" /></MenuNotch>
            {menuItems.map(m => <MenuItem key={m}>{m}</MenuItem>)}
            <MenuRule />
            <MenuItem>Moderation History</MenuItem>
          </Menu>
        </Page>
        <ScrollBar>
          <ScrollArrow $up />
          <ScrollThumb />
          <ScrollArrow />
        </ScrollBar>
      </Viewport>

      <TaskBar>
        <Start><StartOrb /></Start>
        <Task><AppTile $c="#31c5f0" $bg="#1f1630">Ps</AppTile></Task>
        <Task><AppTile $c="#f77f00" $bg="#261300">Ai</AppTile></Task>
        <Task><WordIcon /></Task>
        <Task><HIcon /></Task>
        <Task $open $bright><SublimeIcon /></Task>
        <Task><NitroIcon /></Task>
        <Task $open><ExplorerIcon /></Task>
        <Task $open $bright $stack><ChromeIcon /></Task>
        <Task><VlcIcon /></Task>
        <Task><FirefoxIcon /></Task>
        <Task><LimeIcon /></Task>
        <Task $open><WindowIcon /></Task>
        <Task $open><VolumeIcon /></Task>
        <Task $open><XamppIcon /></Task>
        <Task $open><PaintIcon /></Task>
        <Tray>
          <TrayIcons>
            <svg width="8" height="5" viewBox="0 0 8 5"><path d="M0 4.500L4 .5l4 4z" fill="#fff" /></svg>
            <svg width="17" height="16" viewBox="0 0 17 16"><path d="M1.500 1v14" stroke="#fff" strokeWidth="1.500" /><path d="M3 2h5v1h6v7H8V8H3z" fill="#fff" /><circle cx="11" cy="10.500" r="4.500" fill="#d8231f" /><path d="M9 8.500l4 4M13 8.500l-4 4" stroke="#fff" strokeWidth="1.500" /></svg>
            <svg width="15" height="14" viewBox="0 0 15 14"><path d="M0 4.500h2.500L6.500.5v13l-4-4H0z" fill="#fff" /><path d="M8.500 4.500q1.500 2.500 0 5M10.500 3q2.500 4 0 8M12.500 1.500q3 5.500 0 11" fill="none" stroke="#fff" strokeWidth="1.100" /></svg>
          </TrayIcons>
          <Clock><div>7:23 PM</div><div>8/16/2017</div></Clock>
          <ShowDesktop />
        </Tray>
      </TaskBar>
    </Screen>
  );
}

export default App;
